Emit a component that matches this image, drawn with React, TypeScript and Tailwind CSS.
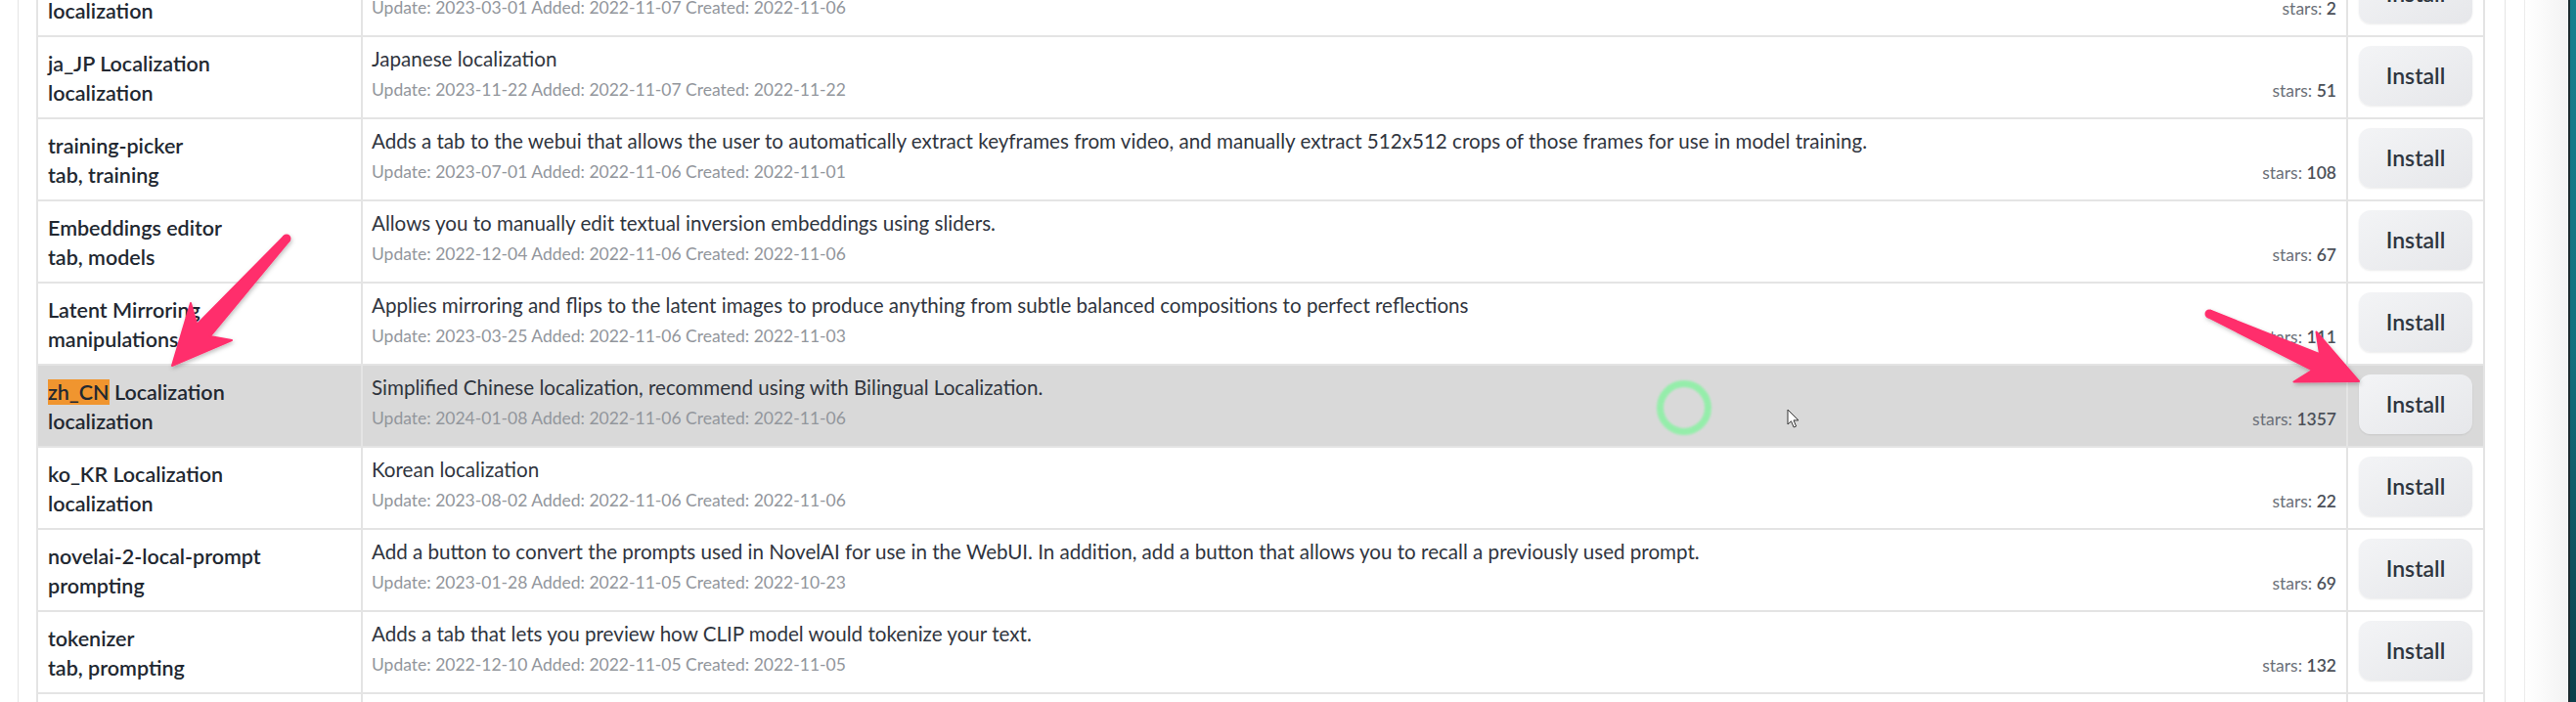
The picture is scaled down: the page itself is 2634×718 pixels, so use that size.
import type { ReactNode } from "react";

interface Extension {
  name: ReactNode;
  tags: string;
  description: string;
  update: string;
  added: string;
  created: string;
  stars: number;
  highlighted?: boolean;
}

const EXTENSIONS: Extension[] = [
  {
    name: "zh_TW Localization",
    tags: "localization",
    description: "Traditional Chinese localization",
    update: "2023-03-01",
    added: "2022-11-07",
    created: "2022-11-06",
    stars: 2,
  },
  {
    name: "ja_JP Localization",
    tags: "localization",
    description: "Japanese localization",
    update: "2023-11-22",
    added: "2022-11-07",
    created: "2022-11-22",
    stars: 51,
  },
  {
    name: "training-picker",
    tags: "tab, training",
    description:
      "Adds a tab to the webui that allows the user to automatically extract keyframes from video, and manually extract 512x512 crops of those frames for use in model training.",
    update: "2023-07-01",
    added: "2022-11-06",
    created: "2022-11-01",
    stars: 108,
  },
  {
    name: "Embeddings editor",
    tags: "tab, models",
    description: "Allows you to manually edit textual inversion embeddings using sliders.",
    update: "2022-12-04",
    added: "2022-11-06",
    created: "2022-11-06",
    stars: 67,
  },
  {
    name: "Latent Mirroring",
    tags: "manipulations",
    description:
      "Applies mirroring and flips to the latent images to produce anything from subtle balanced compositions to perfect reflections",
    update: "2023-03-25",
    added: "2022-11-06",
    created: "2022-11-03",
    stars: 111,
  },
  {
    name: (
      <>
        <span className="bg-[#f0952f]">zh_CN</span> Localization
      </>
    ),
    tags: "localization",
    description: "Simplified Chinese localization, recommend using with Bilingual Localization.",
    update: "2024-01-08",
    added: "2022-11-06",
    created: "2022-11-06",
    stars: 1357,
    highlighted: true,
  },
  {
    name: "ko_KR Localization",
    tags: "localization",
    description: "Korean localization",
    update: "2023-08-02",
    added: "2022-11-06",
    created: "2022-11-06",
    stars: 22,
  },
  {
    name: "novelai-2-local-prompt",
    tags: "prompting",
    description:
      "Add a button to convert the prompts used in NovelAI for use in the WebUI. In addition, add a button that allows you to recall a previously used prompt.",
    update: "2023-01-28",
    added: "2022-11-05",
    created: "2022-10-23",
    stars: 69,
  },
  {
    name: "tokenizer",
    tags: "tab, prompting",
    description: "Adds a tab that lets you preview how CLIP model would tokenize your text.",
    update: "2022-12-10",
    added: "2022-11-05",
    created: "2022-11-05",
    stars: 132,
  },
  {
    name: "",
    tags: "",
    description: "",
    update: "",
    added: "",
    created: "",
    stars: 0,
  },
];

function ExtensionRow({ ext }: { ext: Extension }) {
  const empty = ext.update === "";

  return (
    <div
      className={`flex h-[84px] shrink-0 border-b-2 border-[#e4e4e4] ${
        ext.highlighted ? "bg-[#d9d9d9]" : "bg-white"
      }`}
    >
      <div className="w-[332px] shrink-0 border-r-2 border-[#e4e4e4] pl-[10px] pt-[12px] text-[21.5px] font-semibold leading-[30px] text-[#222831]">
        <div className="whitespace-nowrap">{ext.name}</div>
        <div className="whitespace-nowrap">{ext.tags}</div>
      </div>

      <div className="flex min-w-0 flex-1 flex-col border-r-2 border-[#e4e4e4] pl-[9px] pr-[10px] pt-[7px]">
        <p className="whitespace-nowrap text-[20.6px] leading-[30px] text-[#30353e]">{ext.description}</p>
        {!empty ? (
          <div className="flex items-center justify-between text-[17.5px] leading-[30px]">
            <span className="text-[#92969c]">
              Update: {ext.update} Added: {ext.added} Created: {ext.created}
            </span>
            <span className="pt-[3px] text-[#6b7078]">
              stars: <span className="font-semibold text-[#4b5058]">{ext.stars}</span>
            </span>
          </div>
        ) : null}
      </div>

      <div className="flex w-[138px] shrink-0 items-start pl-[11px] pt-[9px]">
        {!empty ? (
          <button
            type="button"
            className="h-[61px] w-[116px] rounded-[12px] bg-gradient-to-br from-[#f3f4f6] to-[#e6e7ea] text-[23px] font-semibold text-[#2f3640] shadow-[0_1px_2px_rgba(0,0,0,0.08)]"
          >
            Install
          </button>
        ) : null}
      </div>
    </div>
  );
}

function Annotations() {
  return (
    <svg className="pointer-events-none absolute left-0 top-0" width="2634" height="718" viewBox="0 0 2634 718">
      <defs>
        <filter id="arrowShadow" x="-20%" y="-20%" width="140%" height="140%">
          <feDropShadow dx="1" dy="2" stdDeviation="2" floodColor="#000" floodOpacity="0.25" />
        </filter>
      </defs>
      <g fill="#ff2e6c" stroke="#ff2e6c" strokeWidth="2" strokeLinejoin="round" filter="url(#arrowShadow)">
        <polygon points="290.4,241.7 201.3,332 195,310 176,374 237,348 214.7,344 295.6,246.3" />
        <circle cx="293" cy="244" r="3.5" />
        <polygon points="2257.6,324.2 2364.6,378.5 2345.5,390.5 2412,390 2368.5,339.5 2372,362.1 2260.4,317.8" />
        <circle cx="2259" cy="321" r="3.5" />
      </g>
    </svg>
  );
}

export default function App() {
  return (
    <div
      className="relative flex h-[718px] w-[2634px] overflow-hidden bg-white"
      style={{ fontFamily: "Lato, 'Noto Sans', sans-serif" }}
    >
      <div className="flex h-full w-[2582px] shrink-0 border-r border-[#ececec]">
        <div className="ml-[18px] flex h-full w-[2544px] shrink-0 border-x border-[#e5e5e5] pl-[18px]">
          <div className="-mt-[46px] flex w-[2504px] shrink-0 flex-col border-x-2 border-[#e4e4e4]">
            {EXTENSIONS.map((ext, index) => (
              <ExtensionRow key={index} ext={ext} />
            ))}
          </div>
        </div>
      </div>

      <div className="h-full flex-1 bg-gradient-to-r from-white to-[#f3f3f3]" />
      <div className="h-full w-[8px] border-l-2 border-[#1b2a2e] bg-gradient-to-b from-[#17808f] via-[#12707e] to-[#0b3f4a]" />

      <div className="pointer-events-none absolute left-[1694px] top-[389px] h-[56px] w-[56px] rounded-full border-[7px] border-[#8ef0a6] opacity-90 blur-[1px]" />

      <svg className="pointer-events-none absolute left-[1827px] top-[418px]" width="14" height="21" viewBox="0 0 14 21">
        <path d="M1 1 L1 16 L4.5 12.8 L7.2 19 L9.6 18 L7 11.9 L12 11.9 Z" fill="#fff" stroke="#333" strokeWidth="1" strokeLinejoin="round" />
      </svg>

      <Annotations />
    </div>
  );
}
